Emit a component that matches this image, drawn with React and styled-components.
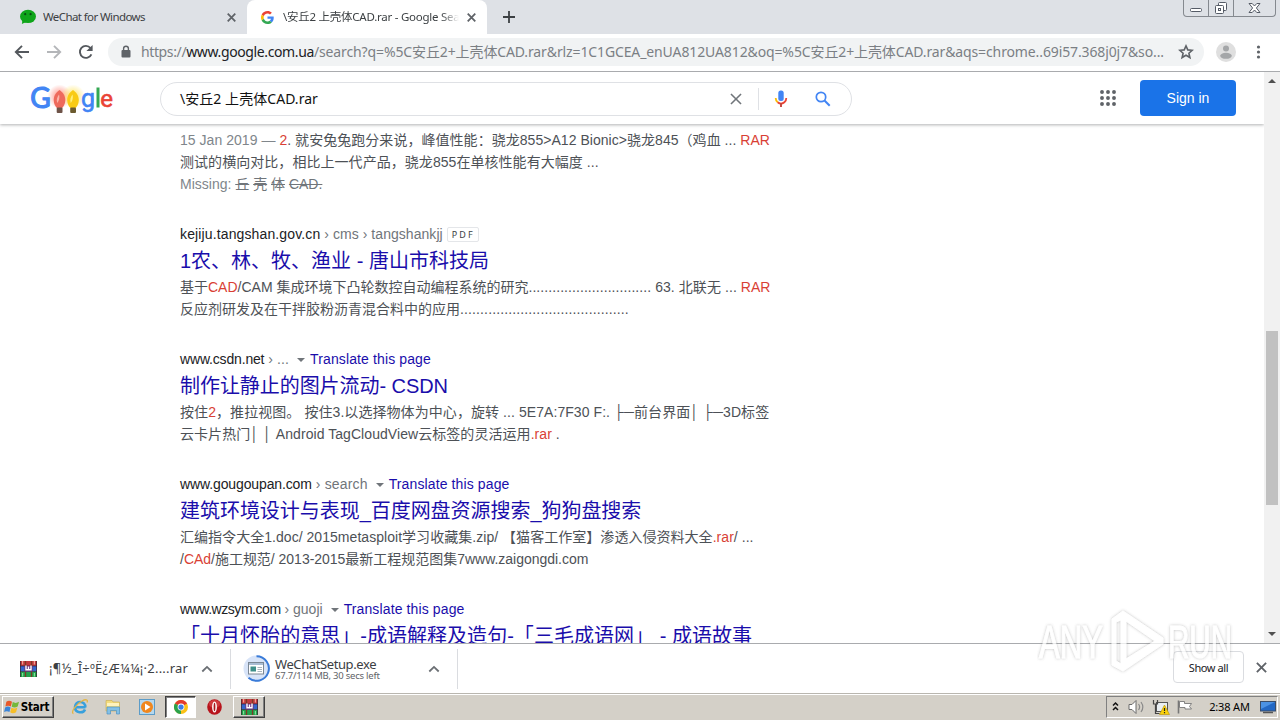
import React from "react";
import styled, { createGlobalStyle } from "styled-components";

const arial = `"Liberation Sans", "Noto Sans CJK SC", sans-serif`;
const tahoma = `"Noto Sans", "Noto Sans CJK SC", sans-serif`;

const GlobalStyle = createGlobalStyle`
  * {
    box-sizing: border-box;
  }

  body {
    margin: 0;
    overflow: hidden;
    background: #fff;
    font-family: ${arial};
  }

  svg {
    display: block;
    flex: none;
  }
`;

const Screen = styled.div`
  width: 1280px;
  height: 720px;
  display: flex;
  flex-direction: column;
  position: relative;
  overflow: hidden;
`;

/* ---------- browser chrome ---------- */

const TabStrip = styled.div`
  height: 34px;
  flex: none;
  display: flex;
  align-items: flex-start;
  background: #dee1e6;
  font-family: ${tahoma};
`;

const Tab = styled.div`
  width: ${(p) => p.$width}px;
  height: 34px;
  display: flex;
  align-items: center;
  padding: 0 11px 0 ${(p) => p.$left}px;
  border-radius: 8px 8px 0 0;
  background: ${(p) => (p.$active ? "#fff" : "transparent")};
`;

const TabTitle = styled.div`
  flex: 1;
  margin: 0 8px 0 ${(p) => p.$gap}px;
  overflow: hidden;
  white-space: nowrap;
  font-size: 11.5px;
  line-height: 18px;
  letter-spacing: ${(p) => p.$track || 0}px;
  color: #3c4043;
  ${(p) =>
    p.$fade &&
    "mask-image: linear-gradient(to right, #000 calc(100% - 18px), transparent);"}
`;

const NewTab = styled.div`
  padding: 11px 0 0 16px;
`;

const WindowButtons = styled.div`
  display: flex;
  height: 17px;
  margin: 0 4px 0 auto;
  border: 1px solid #85898f;
  border-top: 0;
  border-radius: 0 0 4px 4px;
`;

const WindowButton = styled.div`
  width: ${(p) => p.$width}px;
  display: flex;
  align-items: center;
  justify-content: center;

  & + & {
    border-left: 1px solid #85898f;
  }
`;

const Toolbar = styled.div`
  height: 38px;
  flex: none;
  display: flex;
  align-items: center;
  padding: 0 12px 2px 14px;
  background: #fff;
  border-bottom: 1px solid #a9abae;
`;

const NavIcons = styled.div`
  display: flex;
  gap: 16px;
`;

const Omnibox = styled.div`
  width: 1096px;
  height: 28px;
  flex: none;
  margin-left: 14px;
  padding: 0 10px 0 12px;
  display: flex;
  align-items: center;
  border-radius: 14px;
  background: #f1f3f4;
`;

const Url = styled.div`
  flex: 1;
  margin-left: 9px;
  white-space: nowrap;
  font-family: ${tahoma};
  font-size: 14px;
  line-height: 22px;
  letter-spacing: ${(p) => p.$track}px;
  color: #7b7f84;
`;

const UrlOrigin = styled.span`
  letter-spacing: -0.38px;
`;

const UrlHost = styled.span`
  color: #202124;
`;

const ToolbarEnd = styled.div`
  display: flex;
  align-items: center;
  gap: 14px;
  margin-left: 12px;
`;

/* ---------- search page ---------- */

const Viewport = styled.div`
  height: 571px;
  flex: none;
  display: flex;
`;

const Page = styled.div`
  width: 1264px;
  display: flex;
  flex-direction: column;
  overflow: hidden;
`;

const Header = styled.header`
  height: 52px;
  flex: none;
  display: flex;
  align-items: center;
  padding: 0 28px;
  box-shadow: 0 1px 3px rgba(32, 33, 36, 0.35);
`;

const SearchBox = styled.div`
  width: 692px;
  height: 34px;
  margin-left: 42px;
  margin-top: 2px;
  padding: 0 20px 0 19px;
  display: flex;
  align-items: center;
  border: 1px solid #dfe1e5;
  border-radius: 17px;
`;

const Query = styled.div`
  flex: 1;
  font-family: ${tahoma};
  font-size: 14px;
  line-height: 22px;
  letter-spacing: 0.05px;
  color: #111;
`;

const Separator = styled.div`
  width: 1px;
  height: 22px;
  margin: 0 14px 0 16px;
  background: #dfe1e5;
`;

const SignIn = styled.div`
  width: 96px;
  height: 36px;
  margin-left: 24px;
  display: flex;
  align-items: center;
  justify-content: center;
  border-radius: 4px;
  background: #1a73e8;
  color: #fff;
  font-size: 14px;
`;

const Results = styled.main`
  flex: 1;
  min-height: 0;
  padding: 5px 0 0 180px;
  overflow: hidden;
`;

const Result = styled.article`
  margin-bottom: 28px;
  font-size: 14px;
  line-height: 22px;
  color: #4d5156;
  white-space: nowrap;
`;

const Line = styled.div`
  height: 22px;
  letter-spacing: ${(p) => p.$track || 0}px;
  display: ${(p) => (p.$flex ? "flex" : "block")};
  align-items: center;
`;

const Run = styled.span`
  ${(p) => p.$track !== undefined && `letter-spacing: ${p.$track}px;`}
`;

const Host = styled(Run)`
  color: #202124;
`;

const Path = styled(Run)`
  color: #70757a;
  white-space: pre;
`;

const Grey = styled.span`
  color: #80868b;
`;

const Strike = styled.s`
  color: #70757a;
`;

const Hit = styled.em`
  font-style: normal;
  color: #d93f35;
`;

const Caret = styled.span`
  margin: 2px 5px 0 8px;
  border: 4.5px solid transparent;
  border-top-color: #70757a;
  border-bottom: 0;
`;

const Translate = styled.a`
  color: #1a0dab;
  letter-spacing: 0.12px;
`;

const PdfTag = styled.span`
  height: 15px;
  margin-left: 4px;
  padding: 0 3px 0 4px;
  border: 1px solid #e4e6e9;
  border-radius: 2px;
  font-family: ${tahoma};
  font-size: 9px;
  line-height: 14px;
  letter-spacing: 2.1px;
  color: #3c4043;
`;

const Title = styled.h3`
  height: 31px;
  margin: 0;
  padding-top: 1px;
  font-size: 20px;
  font-weight: 400;
  line-height: 30px;
  letter-spacing: ${(p) => p.$track || 0}px;
  color: #1a0dab;
`;

const Scrollbar = styled.div`
  width: 16px;
  display: flex;
  flex-direction: column;
  align-items: center;
  background: #f1f1f1;
`;

const ScrollArrow = styled.div`
  margin: ${(p) => (p.$down ? "auto 0 7px" : "7px 0 0")};
  border: 4px solid transparent;
  ${(p) =>
    p.$down
      ? "border-top-color: #505050; border-bottom: 0;"
      : "border-bottom-color: #505050; border-top: 0;"}
`;

const Thumb = styled.div`
  width: 12px;
  height: 174px;
  margin-top: 248px;
  background: #c1c1c1;
`;

/* ---------- download shelf ---------- */

const Shelf = styled.div`
  height: 50px;
  flex: none;
  display: flex;
  align-items: center;
  border-top: 1px solid #a9abae;
  background: #fff;
  font-family: ${tahoma};
`;

const Download = styled.div`
  width: ${(p) => p.$width}px;
  height: 40px;
  display: flex;
  align-items: center;
  padding: 0 17px 0 ${(p) => p.$left}px;
  border-right: 1px solid #dadce0;
`;

const FileName = styled.div`
  font-size: 13px;
  line-height: 15px;
  letter-spacing: ${(p) => p.$track || 0}px;
  color: #3c4043;
`;

const FileStatus = styled.div`
  font-size: 9.5px;
  line-height: 8px;
  letter-spacing: -0.22px;
  color: #5f6368;
`;

const FileText = styled.div`
  flex: 1;
  margin-left: ${(p) => p.$gap}px;
  white-space: nowrap;
`;

const ShowAll = styled.div`
  width: 71px;
  height: 32px;
  margin: -3px 12px 0 auto;
  display: flex;
  align-items: center;
  justify-content: center;
  border: 1px solid #dadce0;
  border-radius: 4px;
  font-size: 11px;
  letter-spacing: -0.4px;
  color: #202124;
`;

const ShelfClose = styled.div`
  margin: -3px 13px 0 0;
`;

/* ---------- taskbar ---------- */

const Taskbar = styled.div`
  height: 27px;
  flex: none;
  display: flex;
  align-items: center;
  padding: 1px 2px 2px;
  background: #d4d0c8;
  border-top: 1px solid #b9b6af;
  box-shadow: inset 0 1px #fff;
  font-family: "DejaVu Sans Condensed", "DejaVu Sans", sans-serif;
`;

const TaskButton = styled.div`
  width: ${(p) => p.$width}px;
  height: 22px;
  margin-left: ${(p) => p.$left || 0}px;
  padding-right: ${(p) => p.$right || 0}px;
  display: flex;
  align-items: center;
  justify-content: center;
  gap: 1px;
  border: 1px solid;
  border-color: ${(p) =>
    p.$pressed ? "#404040 #fff #fff #404040" : "#fff #404040 #404040 #fff"};
  box-shadow: inset ${(p) => (p.$pressed ? "1px 1px" : "-1px -1px")} #808080;
  background: ${(p) => (p.$pressed ? "#fff" : "#d4d0c8")};
  font-size: 11.5px;
  font-weight: 700;
  letter-spacing: -0.2px;
  color: #000;
`;

const Spaced = styled.div`
  margin-left: ${(p) => p.$left}px;
`;

const Tray = styled.div`
  width: 172px;
  height: 22px;
  margin-left: auto;
  padding: 0 1px 0 4px;
  display: flex;
  align-items: center;
  border: 1px solid;
  border-color: #808080 #fff #fff #808080;
`;

const Clock = styled.div`
  flex: 1;
  text-align: center;
  padding-left: 4px;
  font-family: ${tahoma};
  font-size: 11px;
  letter-spacing: -0.15px;
  color: #000;
`;

/* ---------- watermark ---------- */

const Watermark = styled.div`
  position: absolute;
  left: 1037px;
  top: 607px;
  width: 200px;
  height: 68px;
`;

/* ---------- icons ---------- */

const Cross = ({ size = 9, color = "#5f6368", width = 2 }) => (
  <svg width={size} height={size} viewBox="0 0 10 10">
    <path d="M.8.8l8.4 8.4M9.2.8L.8 9.2" stroke={color} strokeWidth={width} />
  </svg>
);

const WeChatIcon = () => (
  <svg width="16" height="16" viewBox="0 0 16 16">
    <ellipse cx="8" cy="7.4" rx="8" ry="6.7" fill="#0fa51a" />
    <path d="M2.5 11l-.6 4 4.6-2.2z" fill="#0fa51a" />
    <circle cx="5.2" cy="5.2" r="1.1" fill="#064d12" />
    <circle cx="10.6" cy="5.2" r="1.1" fill="#064d12" />
  </svg>
);

const GoogleG = () => (
  <svg width="13" height="13" viewBox="0 0 48 48">
    <path fill="#EA4335" d="M24 9.5c3.54 0 6.71 1.22 9.21 3.6l6.85-6.85C35.9 2.38 30.47 0 24 0 14.62 0 6.51 5.38 2.56 13.22l7.98 6.19C12.43 13.72 17.74 9.5 24 9.5z" />
    <path fill="#4285F4" d="M46.98 24.55c0-1.57-.15-3.09-.38-4.55H24v9.02h12.94c-.58 2.96-2.26 5.48-4.78 7.18l7.73 6c4.51-4.18 7.09-10.36 7.09-17.65z" />
    <path fill="#FBBC05" d="M10.53 28.59c-.48-1.45-.76-2.99-.76-4.59s.27-3.14.76-4.59l-7.98-6.19C.92 16.46 0 20.12 0 24c0 3.88.92 7.54 2.56 10.78l7.97-6.19z" />
    <path fill="#34A853" d="M24 48c6.48 0 11.93-2.13 15.89-5.81l-7.73-6c-2.15 1.45-4.92 2.3-8.16 2.3-6.26 0-11.57-4.22-13.47-9.91l-7.98 6.19C6.51 42.62 14.62 48 24 48z" />
  </svg>
);

const Arrow = ({ color, flip }) => (
  <svg width="16" height="16" viewBox="0 0 16 16">
    <path
      d="M15 8H2.5M8 1.8L1.8 8 8 14.2"
      fill="none"
      stroke={color}
      strokeWidth="1.9"
      transform={flip ? "translate(16 0) scale(-1 1)" : undefined}
    />
  </svg>
);

const Reload = () => (
  <svg width="16" height="16" viewBox="0 0 16 16">
    <path d="M13.4 10.3A6 6 0 1 1 12.5 4l1 1" fill="none" stroke="#54585d" strokeWidth="1.9" />
    <path d="M14.6.9v6.2H8.4z" fill="#54585d" />
  </svg>
);

const Lock = () => (
  <svg width="12" height="14" viewBox="0 0 12 14">
    <rect x="1.5" y="5" width="9" height="7.6" rx="1" fill="#5f6368" />
    <path d="M3.6 5.5V3.6a2.4 2.4 0 0 1 4.8 0v1.9" fill="none" stroke="#5f6368" strokeWidth="1.4" />
  </svg>
);

const Star = () => (
  <svg width="16" height="16" viewBox="0 0 16 16">
    <path
      d="M8 1.9l1.8 4 4.4.4-3.3 2.9 1 4.3L8 11.2l-3.9 2.3 1-4.3L1.8 6.3l4.4-.4z"
      fill="none"
      stroke="#5f6368"
      strokeWidth="1.6"
    />
  </svg>
);

const Avatar = () => (
  <svg width="20" height="20" viewBox="0 0 20 20">
    <circle cx="10" cy="10" r="10" fill="#dfdfdf" />
    <circle cx="10" cy="6.4" r="3" fill="#a4a6a8" />
    <ellipse cx="10" cy="13.8" rx="5.8" ry="3" fill="#a4a6a8" />
  </svg>
);

const Dots = () => (
  <svg width="18" height="16" viewBox="0 0 18 16">
    {[3, 8, 13].map((y) => (
      <circle key={y} cx="8.5" cy={y} r="1.6" fill="#5f6368" />
    ))}
  </svg>
);

const Minimize = () => (
  <svg width="12" height="12" viewBox="0 0 12 12">
    <rect x=".5" y="6.5" width="11" height="3" rx="1" fill="#fff" stroke="#555b66" />
  </svg>
);

const Restore = () => (
  <svg width="14" height="14" viewBox="0 0 14 14" fill="#fff" stroke="#555b66">
    <rect x="4.5" y="1.5" width="8" height="8" rx="1" />
    <rect x="1.5" y="4.5" width="8" height="8" rx="1" />
    <rect x="4.5" y="7.5" width="2" height="2" />
  </svg>
);

const WindowClose = () => (
  <svg width="13" height="12" viewBox="0 0 13 12">
    <path
      d="M1 1.5h3.2L6.5 4l2.3-2.5H12L8.4 6l3.6 4.5H8.8L6.5 8l-2.3 2.5H1L4.6 6z"
      fill="#fff"
      stroke="#555b66"
    />
  </svg>
);

const Logo = () => (
  <svg width="90" height="36" viewBox="27.5 79.5 90 36" fontFamily="Roboto, sans-serif">
    <defs>
      <radialGradient id="redGlow">
        <stop offset="0.4" stopColor="#ff8b7d" stopOpacity="0.6" />
        <stop offset="1" stopColor="#ff8b7d" stopOpacity="0" />
      </radialGradient>
      <radialGradient id="yellowGlow">
        <stop offset="0.4" stopColor="#ffe45a" stopOpacity="0.6" />
        <stop offset="1" stopColor="#ffe45a" stopOpacity="0" />
      </radialGradient>
    </defs>
    <circle cx="59" cy="96" r="12" fill="url(#redGlow)" />
    <circle cx="72.5" cy="96" r="12" fill="url(#yellowGlow)" />
    <text x="29.8" y="107" fontFamily="Lato, sans-serif" fontSize="28" fill="#4285f4" stroke="#4285f4" strokeWidth="1.2">
      G
    </text>
    <path d="M59 89.5c3.4 2.5 5.8 5.6 5.8 10 0 4-1.8 6.5-3.2 8h-5.2c-1.4-1.5-3.2-4-3.2-8 0-4.4 2.4-7.5 5.8-10z" fill="#ee6a5c" />
    <path d="M58.5 94c-2 2.5-2.8 5-1.8 8.5 1.5-1.5 2.8-5 1.8-8.5z" fill="#fbb3a8" />
    <path d="M72.5 89.5c3.4 2.5 5.8 5.6 5.8 10 0 4-1.8 6.5-3.2 8h-5.2c-1.4-1.5-3.2-4-3.2-8 0-4.4 2.4-7.5 5.8-10z" fill="#f9cb14" />
    <path d="M72 94c-2 2.5-2.8 5-1.8 8.5 1.5-1.5 2.8-5 1.8-8.5z" fill="#fff07a" />
    <rect x="56.2" y="107" width="5.8" height="5.5" rx="1" fill="#6e5348" />
    <rect x="69.7" y="107" width="5.8" height="5.5" rx="1" fill="#6b5a2e" />
    <text x="80.6" y="106.5" fontSize="25" fill="#4285f4" stroke="#4285f4" strokeWidth=".6">
      g
    </text>
    <rect x="96" y="87" width="3" height="20" fill="#34a853" />
    <text x="99.8" y="106.5" fontSize="24" fill="#ea4335" stroke="#ea4335" strokeWidth=".6">
      e
    </text>
  </svg>
);

const Mic = () => (
  <svg width="16" height="18" viewBox="0 0 16 18">
    <rect x="5.3" y=".5" width="5.4" height="10.5" rx="2.5" fill="#4285f4" />
    <path d="M2.7 8c0 2 .8 3.4 2 4.3" fill="none" stroke="#fbbc05" strokeWidth="1.8" />
    <path d="M4.6 12.2c2 1.6 4.8 1.6 6.8 0 1.2-1 1.9-2.3 1.9-4.2" fill="none" stroke="#ea4335" strokeWidth="1.8" />
    <path d="M8 13v4" stroke="#c5443a" strokeWidth="1.9" />
  </svg>
);

const Magnifier = () => (
  <svg width="16" height="16" viewBox="0 0 16 16" fill="none" stroke="#4285f4">
    <circle cx="6" cy="6" r="4.7" strokeWidth="1.7" />
    <path d="M9.5 9.5l5.2 5.2" strokeWidth="2" />
  </svg>
);

const AppsGrid = () => (
  <svg width="16" height="16" viewBox="0 0 16 16" fill="#5f6368">
    {[2, 8, 14].map((y) =>
      [2, 8, 14].map((x) => <circle key={`${x}-${y}`} cx={x} cy={y} r="1.95" />)
    )}
  </svg>
);

const Rar = () => (
  <svg width="17" height="16" viewBox="0 0 17 16">
    <rect width="17" height="5" fill="#c23b3f" />
    <rect y="5" width="17" height="5.5" fill="#3466cc" />
    <rect y="10.5" width="17" height="5.5" fill="#22a24c" />
    <path d="M0 5h17M0 10.5h17" stroke="#1c1c38" strokeWidth=".6" />
    <path d="M.4 0v16M16.6 0v16" stroke="#3a2430" strokeWidth=".8" />
    <path d="M5.5 0v16M11.5 0v16" stroke="#7c3a26" strokeWidth="1.3" />
    <rect x="4.5" y="5" width="8" height="5.5" fill="#6b3585" />
    <path d="M6 4.5v4.3h5V4.500M8.5 5.5v3.300" fill="none" stroke="#fff" strokeWidth="1.4" />
    <path d="M2.6 0v3.500M14.4 0v3.500" stroke="#f0a091" strokeWidth="1.2" />
    <path d="M2.6 12v3.500M14.4 12v3.500" stroke="#7fe096" strokeWidth="1.2" />
  </svg>
);

const ChevronUp = () => (
  <svg width="12" height="8" viewBox="0 0 12 8">
    <path d="M1.3 6.5L6 1.9l4.7 4.6" fill="none" stroke="#6b6f74" strokeWidth="1.8" />
  </svg>
);

const SetupProgress = () => (
  <svg width="27" height="27" viewBox="0 0 27 27">
    <circle cx="13.5" cy="13.5" r="13" fill="#d8e4f8" />
    <path d="M13.5 1.2a12.3 12.3 0 1 1-8 21.6" fill="none" stroke="#3a7bd8" strokeWidth="2" />
    <rect x="5.5" y="7.5" width="15" height="11.5" fill="#fff" stroke="#7c8894" />
    <rect x="6" y="8" width="14" height="2" fill="#a9bdd4" />
    <rect x="7.5" y="11.5" width="5.5" height="5" fill="#3f8f8a" />
    <path d="M14.5 12.5H19M14.5 14.5H19M14.5 16.5H19" stroke="#a9b4bd" />
  </svg>
);

const WindowsFlag = () => (
  <svg width="16" height="16" viewBox="0 0 17 16">
    <path d="M2.5 2.5C4.5 1 6.5 1.2 8.5 2.5L7.3 7.5C5.5 6.3 3.5 6.2 1.5 7.4z" fill="#e8582a" />
    <path d="M9.3 2.8c2 1.2 4.2 1.2 6.7-.3l-1.5 5c-2.3 1.4-4.3 1.3-6.3.2z" fill="#74b83a" />
    <path d="M1.2 8.4c2-1.2 4-1.1 5.8 0L5.8 13.4c-1.8-1.2-3.8-1.2-5.7 0z" fill="#3a84d8" />
    <path d="M7.9 8.8c2 1.1 4 1.2 6.3-.2l-1.4 5c-2.2 1.3-4.3 1.3-6.2.1z" fill="#f6be28" />
  </svg>
);

const InternetExplorer = () => (
  <svg width="18" height="17" viewBox="0 0 18 17">
    <path
      d="M14.5 9.3h-10M14.3 9.3C14.8 2.5 4 2 4 9c0 6.500 8.5 6.500 10 2.5"
      fill="none"
      stroke="#38a0dc"
      strokeWidth="2.6"
    />
    <path d="M2.5 15.5C-.8 15 5 6 11 3c3.5-2 6.5-1.7 5 1.5" fill="none" stroke="#e3b545" strokeWidth="1.3" />
  </svg>
);

const Explorer = () => (
  <svg width="16" height="16" viewBox="0 0 16 16">
    <path d="M1 1.5h6l1 1.5h6.5v9H1z" fill="#f3dc7d" stroke="#c9ad4f" strokeWidth=".6" />
    <path d="M2 4h12v3H2z" fill="#fff3bd" />
    <path d="M2 15V8h12.5v7h-3v-3.5h-6V15z" fill="#83c0e6" stroke="#4f94c4" strokeWidth=".7" />
  </svg>
);

const MediaPlayer = () => (
  <svg width="16" height="16" viewBox="0 0 16 16">
    <rect x=".5" y=".5" width="15" height="15" fill="#b5d8ee" stroke="#5c9cc8" />
    <circle cx="8" cy="8" r="6" fill="#f0871e" />
    <path d="M6 4.5v7L11.5 8z" fill="#fff" />
  </svg>
);

const Chrome = () => (
  <svg width="14" height="14" viewBox="0 0 16 16">
    <circle cx="8" cy="8" r="8" fill="#fbc116" />
    <path d="M8 8L1.07 4A8 8 0 0 1 14.93 4z" fill="#e33b2e" />
    <path d="M8 8v8A8 8 0 0 1 1.07 4z" fill="#2ba24c" />
    <circle cx="8" cy="8" r="3.9" fill="#fff" />
    <circle cx="8" cy="8" r="3" fill="#3c7de6" />
  </svg>
);

const Opera = () => (
  <svg width="15" height="16" viewBox="0 0 15 16">
    <ellipse cx="7.5" cy="8" rx="7.3" ry="7.8" fill="#b8141c" />
    <ellipse cx="7.5" cy="5" rx="5.5" ry="4" fill="#cf3a3e" />
    <ellipse cx="7.5" cy="8" rx="2.4" ry="5.6" fill="#fff" />
    <ellipse cx="7.5" cy="8" rx=".9" ry="4.3" fill="#a8161c" />
  </svg>
);

const TrayIcons = () => (
  <svg width="84" height="18" viewBox="0 0 84 18">
    <path d="M2 7.5L4.5 5 7 7.5M2 12l2.5-2.5L7 12" fill="none" stroke="#111" strokeWidth="1.5" />
    <path d="M18 6.5h3l4-4v13l-4-4h-3z" fill="#fff" stroke="#6b6b6b" />
    <path d="M27.5 6c1.5 2 1.5 4 0 6M30 4c2.3 3.3 2.3 7 0 10" fill="none" stroke="#8a8a8a" strokeWidth="1.2" />
    <rect x="45.5" y="4.5" width="11" height="9" fill="#e9eef2" stroke="#555" />
    <path d="M42.5 2v4h4V2M44.5 6v9.5h4" fill="none" stroke="#444" strokeWidth="1.2" />
    <path d="M53.5 7l5 9.5h-10z" fill="#fbd20a" stroke="#b58f00" strokeWidth=".6" />
    <path d="M53.5 10v3M53.5 14v1.2" stroke="#222" strokeWidth="1.2" />
    <path d="M67.5 2.5v13" stroke="#777" strokeWidth="1.6" />
    <path d="M68.5 3.5h5v2h7l-2 3 2 2.5h-6.5V9.500h-5.500z" fill="#fff" stroke="#777" strokeWidth=".9" />
  </svg>
);

const Desktop = () => (
  <svg width="16" height="14" viewBox="0 0 16 14">
    <rect x=".5" y="1.5" width="15" height="9.5" fill="#2368c4" stroke="#3b4d68" />
    <path d="M1 2h14L1 9z" fill="#4b92e4" />
    <path d="M3 12.5h10" stroke="#555" strokeWidth="1.5" />
  </svg>
);

const WatermarkArt = () => (
  <svg width="200" height="68" viewBox="0 0 200 68">
    <defs>
      <filter id="halo" x="-10%" y="-10%" width="120%" height="120%">
        <feDropShadow dx="0" dy="0" stdDeviation="1.6" floodColor="#555" floodOpacity=".5" />
      </filter>
    </defs>
    <g
      fill="#fff"
      stroke="#fff"
      strokeWidth="1"
      strokeLinejoin="round"
      fontFamily="'Liberation Sans', sans-serif"
      fontSize="46"
      filter="url(#halo)"
      opacity=".75"
    >
      <text x="2" y="51" textLength="64" lengthAdjust="spacingAndGlyphs">
        ANY
      </text>
      <path d="M75 12l11-8 40 27v6L86 64l-11-6zM79 15v39l5 3V13zM89 14v38l29-18z" fillRule="evenodd" />
      <text x="131" y="51" textLength="64" lengthAdjust="spacingAndGlyphs">
        RUN
      </text>
    </g>
  </svg>
);

/* ---------- page parts ---------- */

const ResultUrl = ({ host, path, track, pathTrack }) => (
  <Line $flex>
    <Host $track={track}>{host}</Host>
    <Path $track={pathTrack}>{` › ${path}`}</Path>
    <Caret />
    <Translate>Translate this page</Translate>
  </Line>
);

const App = () => {
  return (
    <Screen>
      <GlobalStyle />

      <TabStrip>
        <Tab $width={247} $left={20}>
          <WeChatIcon />
          <TabTitle $gap={7} $track={-0.6}>
            WeChat for Windows
          </TabTitle>
          <Cross />
        </Tab>
        <Tab $active $width={240} $left={14}>
          <GoogleG />
          <TabTitle $gap={9} $track={-0.25} $fade>
            \安丘2 上壳体CAD.rar - Google Search
          </TabTitle>
          <Cross />
        </Tab>
        <NewTab>
          <svg width="12" height="12" viewBox="0 0 12 12">
            <path d="M6 0v12M0 6h12" stroke="#3c4043" strokeWidth="1.8" />
          </svg>
        </NewTab>
        <WindowButtons>
          <WindowButton $width={24}>
            <Minimize />
          </WindowButton>
          <WindowButton $width={25}>
            <Restore />
          </WindowButton>
          <WindowButton $width={42}>
            <WindowClose />
          </WindowButton>
        </WindowButtons>
      </TabStrip>

      <Toolbar>
        <NavIcons>
          <Arrow color="#54585d" />
          <Arrow color="#b4b6b9" flip />
          <Reload />
        </NavIcons>
        <Omnibox>
          <Lock />
          <Url $track={-0.12}>
            <UrlOrigin>
              https://<UrlHost>www.google.com.ua</UrlHost>
            </UrlOrigin>
            /search?q=%5C安丘2+上壳体CAD.rar&amp;rlz=1C1GCEA_enUA812UA812&amp;oq=%5C安丘2+上壳体CAD.rar&amp;aqs=chrome..69i57.368j0j7&amp;so...
          </Url>
          <Star />
        </Omnibox>
        <ToolbarEnd>
          <Avatar />
          <Dots />
        </ToolbarEnd>
      </Toolbar>

      <Viewport>
        <Page>
          <Header>
            <Logo />
            <SearchBox>
              <Query>\安丘2 上壳体CAD.rar</Query>
              <Cross size={12} color="#70757a" width={1.3} />
              <Separator />
              <Mic />
              <Spaced $left={26}>
                <Magnifier />
              </Spaced>
            </SearchBox>
            <Spaced $left={248}>
              <AppsGrid />
            </Spaced>
            <SignIn>Sign in</SignIn>
          </Header>

          <Results>
            <Result>
              <Line $track={0.04}>
                <Grey>15 Jan 2019 — </Grey>
                <Hit>2</Hit>. 就安兔兔跑分来说，峰值性能：骁龙855&gt;A12 Bionic&gt;骁龙845（鸡血 ... <Hit>RAR</Hit>
              </Line>
              <Line $track={0.05}>测试的横向对比，相比上一代产品，骁龙855在单核性能有大幅度 ...</Line>
              <Line>
                <Grey>Missing: </Grey>
                <Strike>丘</Strike> <Strike>壳</Strike> <Strike>体</Strike> <Strike>CAD.</Strike>
              </Line>
            </Result>

            <Result>
              <Line $flex>
                <Host $track={0.13}>kejiju.tangshan.gov.cn</Host>
                <Path $track={0.05}> › cms › tangshankjj</Path>
                <PdfTag>PDF</PdfTag>
              </Line>
              <Title>1农、林、牧、渔业 - 唐山市科技局</Title>
              <Line>
                基于<Hit>CAD</Hit>/CAM 集成环境下凸轮数控自动编程系统的研究
                <Run $track={0.07}>............................... 63. 北联无 ... </Run>
                <Hit>RAR</Hit>
              </Line>
              <Line>
                反应剂研发及在干拌胶粉沥青混合料中的应用
                <Run $track={0.13}>..........................................</Run>
              </Line>
            </Result>

            <Result>
              <ResultUrl host="www.csdn.net" path="..." track={-0.17} pathTrack={0.1} />
              <Title $track={-0.06}>制作让静止的图片流动- CSDN</Title>
              <Line $track={0.07}>
                按住<Hit>2</Hit>，推拉视图。 按住3.以选择物体为中心，旋转 ... 5E7A:7F30 F:. ├─前台界面│ ├─3D标签
              </Line>
              <Line $track={0.06}>
                云卡片热门│ │ Android TagCloudView云标签的灵活运用<Hit>.rar</Hit> .
              </Line>
            </Result>

            <Result>
              <ResultUrl host="www.gougoupan.com" path="search" track={-0.12} pathTrack={0.15} />
              <Title $track={-0.04}>建筑环境设计与表现_百度网盘资源搜索_狗狗盘搜索</Title>
              <Line $track={0.04}>
                汇编指令大全1.doc/ 2015metasploit学习收藏集.zip/ 【猫客工作室】渗透入侵资料大全<Hit>.rar</Hit>/ ...
              </Line>
              <Line $track={-0.02}>
                /<Hit>CAd</Hit>/施工规范/ 2013-2015最新工程规范图集7www.zaigongdi.com
              </Line>
            </Result>

            <Result>
              <ResultUrl host="www.wzsym.com" path="guoji" track={-0.46} />
              <Title $track={0.03}>「十月怀胎的意思」-成语解释及造句-「三毛成语网」 - 成语故事</Title>
            </Result>
          </Results>
        </Page>
        <Scrollbar>
          <ScrollArrow />
          <Thumb />
          <ScrollArrow $down />
        </Scrollbar>
      </Viewport>

      <Shelf>
        <Download $width={231} $left={20}>
          <Rar />
          <FileText $gap={12}>
            <FileName $track={0.22}>¡¶½_Î÷ºË¿Æ¼¼¡·2....rar</FileName>
          </FileText>
          <ChevronUp />
        </Download>
        <Download $width={227} $left={12}>
          <SetupProgress />
          <FileText $gap={5}>
            <FileName $track={-0.4}>WeChatSetup.exe</FileName>
            <FileStatus>67.7/114 MB, 30 secs left</FileStatus>
          </FileText>
          <ChevronUp />
        </Download>
        <ShowAll>Show all</ShowAll>
        <ShelfClose>
          <Cross size={11} width={1.7} />
        </ShelfClose>
      </Shelf>

      <Taskbar>
        <TaskButton $width={52} $right={3}>
          <WindowsFlag />
          Start
        </TaskButton>
        <Spaced $left={17}>
          <InternetExplorer />
        </Spaced>
        <Spaced $left={16}>
          <Explorer />
        </Spaced>
        <Spaced $left={18}>
          <MediaPlayer />
        </Spaced>
        <TaskButton $pressed $width={31} $left={10}>
          <Chrome />
        </TaskButton>
        <Spaced $left={11}>
          <Opera />
        </Spaced>
        <TaskButton $width={32} $left={11}>
          <Rar />
        </TaskButton>
        <Tray>
          <TrayIcons />
          <Clock>2:38 AM</Clock>
          <Desktop />
        </Tray>
      </Taskbar>

      <Watermark>
        <WatermarkArt />
      </Watermark>
    </Screen>
  );
};

export default App;
